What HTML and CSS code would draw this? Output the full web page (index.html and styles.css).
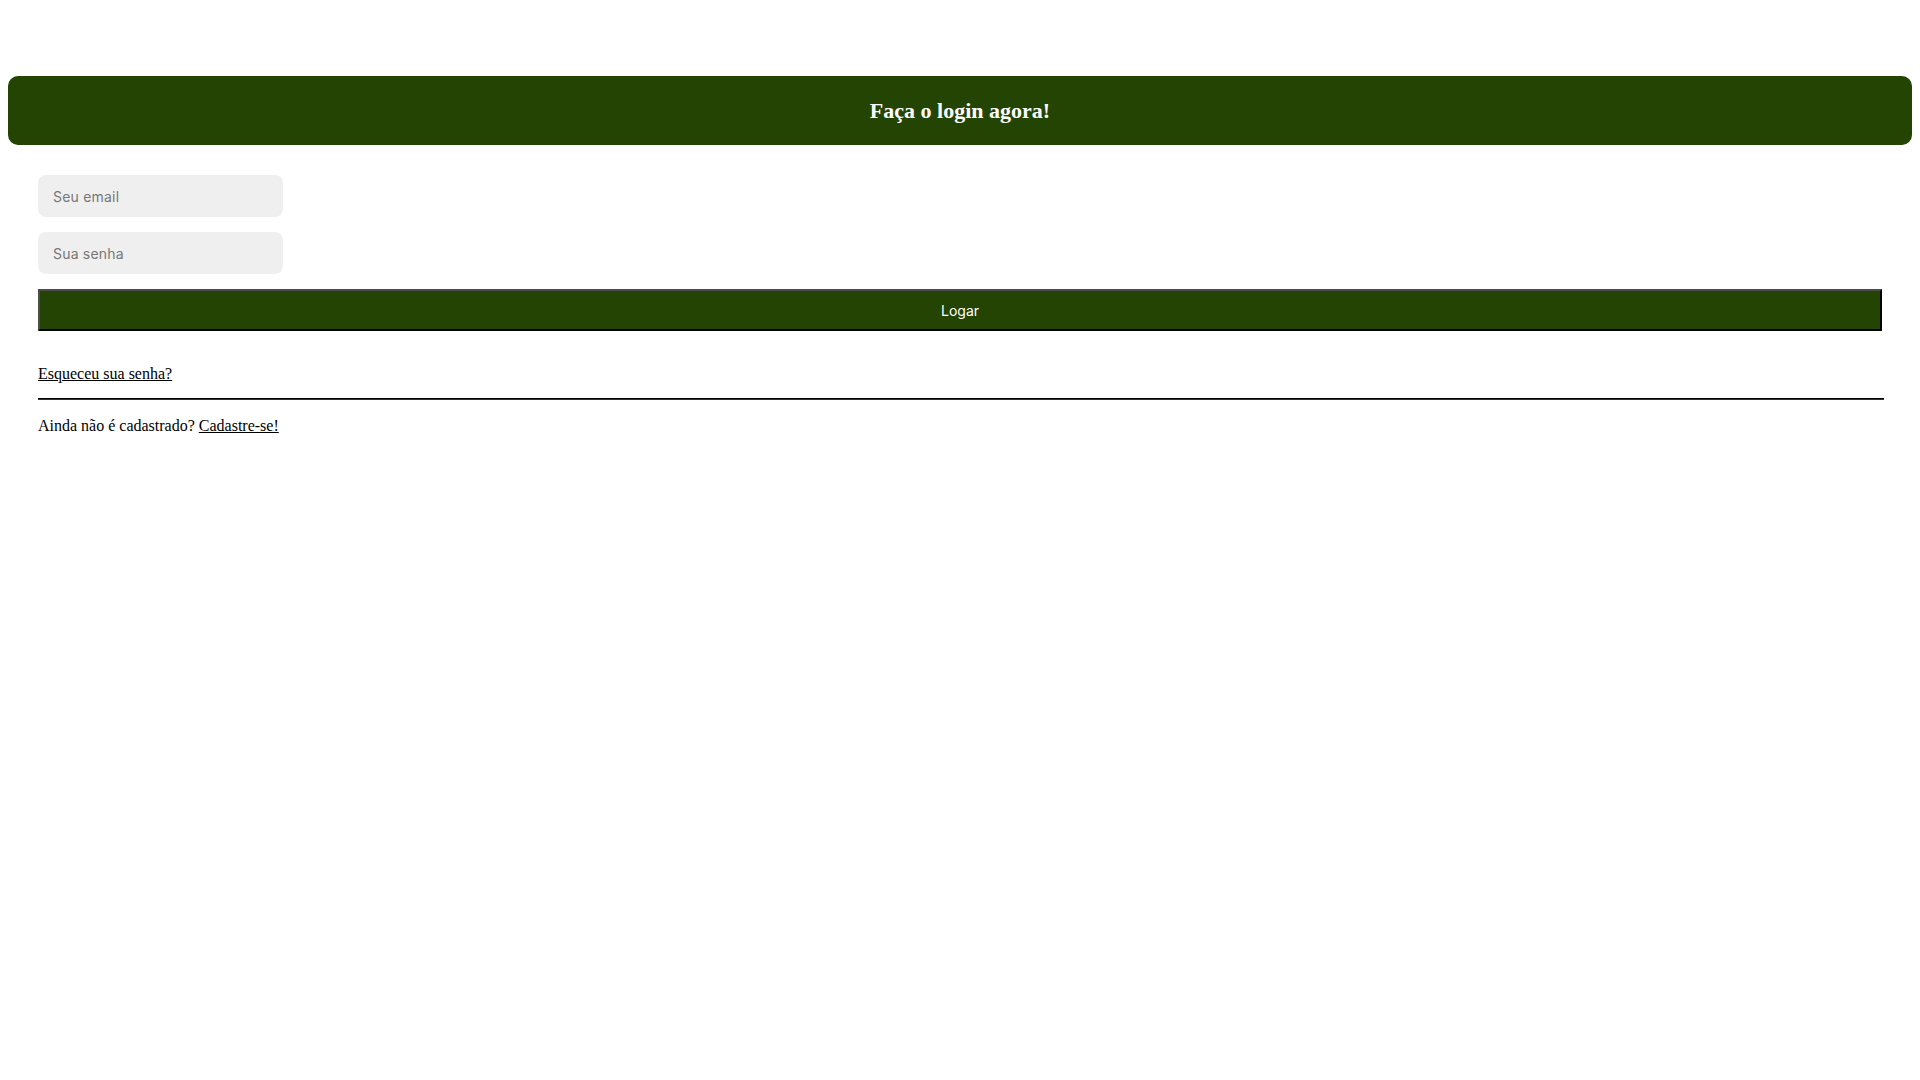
FILE: index.html
```html
<!DOCTYPE html>
<html lang="pt-BR">
<head>
<meta charset="utf-8">
<title>Login</title>
<link rel="stylesheet" href="styles.css">
</head>
<body>
  <header class="banner">
    <h2 class="banner-title">Faça o login agora!</h2>
  </header>
  <main class="login">
    <form class="login-form">
      <input class="field" type="email" placeholder="Seu email">
      <input class="field" type="password" placeholder="Sua senha">
      <button class="submit" type="button">Logar</button>
    </form>
    <p class="forgot"><a href="#">Esqueceu sua senha?</a></p>
    <hr class="divider">
    <p class="signup">Ainda não é cadastrado? <a href="#">Cadastre-se!</a></p>
  </main>
</body>
</html>
```

FILE: styles.css
```css
html, body {
  background: #ffffff;
}
body {
  margin: 8px;
  font-family: "Liberation Serif", "Times New Roman", serif;
  font-size: 16px;
  color: #000;
}
.banner {
  margin-top: 68px;
  height: 69px;
  background: #234402;
  border-radius: 10px;
  display: flex;
  align-items: center;
  justify-content: center;
}
.banner-title {
  margin: 0;
  color: #ffffff;
  font-family: "Liberation Serif", "Times New Roman", serif;
  font-weight: bold;
  font-size: 22px;
  line-height: 25px;
}
.login {
  padding: 30px 30px 0;
}
.login-form {
  display: flex;
  flex-direction: column;
  align-items: flex-start;
  gap: 15px;
  margin: 0;
}
.field {
  width: 245px;
  height: 42px;
  box-sizing: border-box;
  border: none;
  border-radius: 8px;
  background: #efefef;
  padding: 0 15px;
  font-family: Inter, "Noto Sans", sans-serif;
  font-size: 14px;
  letter-spacing: 0.2px;
  color: #333;
  outline: none;
}
.field::placeholder {
  color: #777777;
}
.submit {
  width: 100%;
  height: 42px;
  box-sizing: border-box;
  background: #234402;
  color: #ffffff;
  border-style: solid;
  border-width: 2px;
  border-color: #4c4c4c #000000 #000000 #4c4c4c;
  font-family: Inter, "Noto Sans", sans-serif;
  font-size: 14px;
  padding: 0;
  cursor: pointer;
}
.forgot {
  margin: 34px 0 15px;
  line-height: 18px;
}
.signup {
  margin: 17px 0 0;
  line-height: 18px;
}
.login a {
  color: #000;
  text-decoration: underline;
}
.divider {
  margin: 0 -2px 0 0;
  height: 0;
  border: none;
  border-top: 1px solid #000;
  border-bottom: 1px solid #234402;
}
```
